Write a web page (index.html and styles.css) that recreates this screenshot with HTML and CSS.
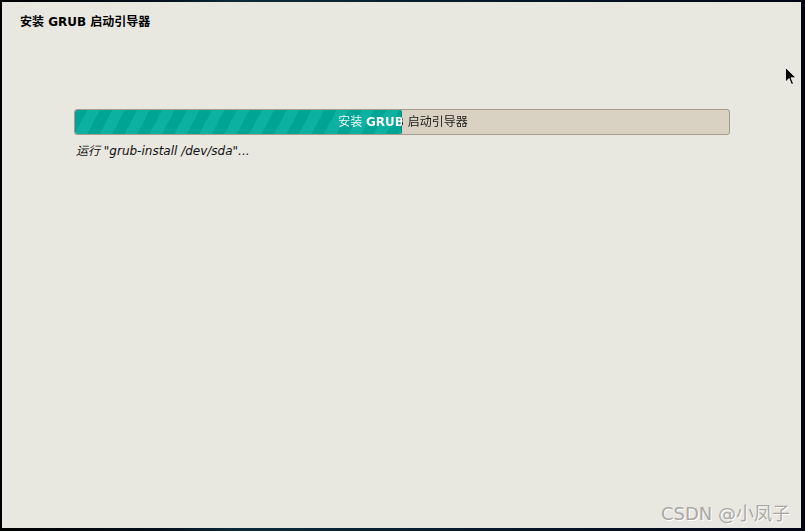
FILE: index.html
```html
<!DOCTYPE html>
<html lang="zh-CN">
<head>
<meta charset="utf-8">
<link rel="stylesheet" href="styles.css">
</head>
<body>
<div class="screen">
  <div class="window">
    <h1 class="title">安装 GRUB 启动引导器</h1>
    <div class="content">
      <div class="progress">
        <div class="fill" style="width: 50%;"></div>
        <div class="label">安装 <b>GRUB</b> 启动引导器</div>
      </div>
      <p class="status">运行 "grub-install /dev/sda"...</p>
    </div>
    <div class="watermark">CSDN @小凤子</div>
    <svg class="cursor" width="12" height="19" viewBox="0 0 12 19"><path d="M0.5 0.5 L0.5 15 L4 11.5 L6.5 17.5 L8.5 16.5 L6 10.8 L11 10.8 Z" fill="#000" stroke="#fff" stroke-width="0.8"/></svg>
  </div>
</div>
</body>
</html>
```
FILE: styles.css
```css
* { box-sizing: border-box; }
html, body { margin: 0; padding: 0; }
body {
  width: 805px;
  height: 531px;
  overflow: hidden;
  background: #05061a;
  font-family: "DejaVu Sans", "Noto Sans CJK SC", sans-serif;
  font-size: 12px;
  color: #000;
}
.screen {
  width: 805px;
  height: 531px;
  padding: 2px 4px 3px 2px;
  background: linear-gradient(90deg, #000 0%, #04101c 20%, #0b2b3a 30%, #06182a 60%, #020414 100%);
}
.window {
  position: relative;
  width: 100%;
  height: 100%;
  background: #e8e7e0;
  display: flex;
  flex-direction: column;
}
.title {
  margin: 0;
  padding: 13px 0 0 18px;
  font-size: 12px;
  font-weight: bold;
  line-height: 15px;
}
.content {
  padding: 0 0 0 72px;
  margin-top: 79px;
  width: 728px;
}
.progress {
  display: grid;
  height: 26px;
  background: #d9d1c2;
  border: 1px solid #a59c8c;
  border-radius: 3px;
  overflow: hidden;
}
.fill, .label {
  grid-area: 1 / 1;
}
.fill {
  height: 24px;
  border-right: 1px solid #1f7d70;
  border-radius: 2px;
  background: repeating-linear-gradient(118deg, #00a494 0px, #00a494 11px, #0cb1a1 11px, #0cb1a1 22px);
}
.label {
  height: 24px;
  line-height: 24px;
  text-align: center;
  padding-left: 2px;
  white-space: nowrap;
  color: transparent;
  background: linear-gradient(90deg, #ffffff 0, #ffffff 327px, #1a1a1a 327px, #1a1a1a 100%);
  -webkit-background-clip: text;
  background-clip: text;
}
.label b { font-weight: bold; }
.status {
  margin: 9px 0 0 2px;
  font-style: italic;
  font-size: 12px;
  line-height: 15px;
  color: #111;
}
.watermark {
  position: absolute;
  right: 11px;
  bottom: 3px;
  font-family: "DejaVu Sans", "Noto Sans CJK SC", sans-serif;
  font-size: 18px;
  color: #a8a8a4;
  text-shadow: 1px 1px 0 #fff;
}
.cursor {
  position: absolute;
  left: 783px;
  top: 65px;
}
```
